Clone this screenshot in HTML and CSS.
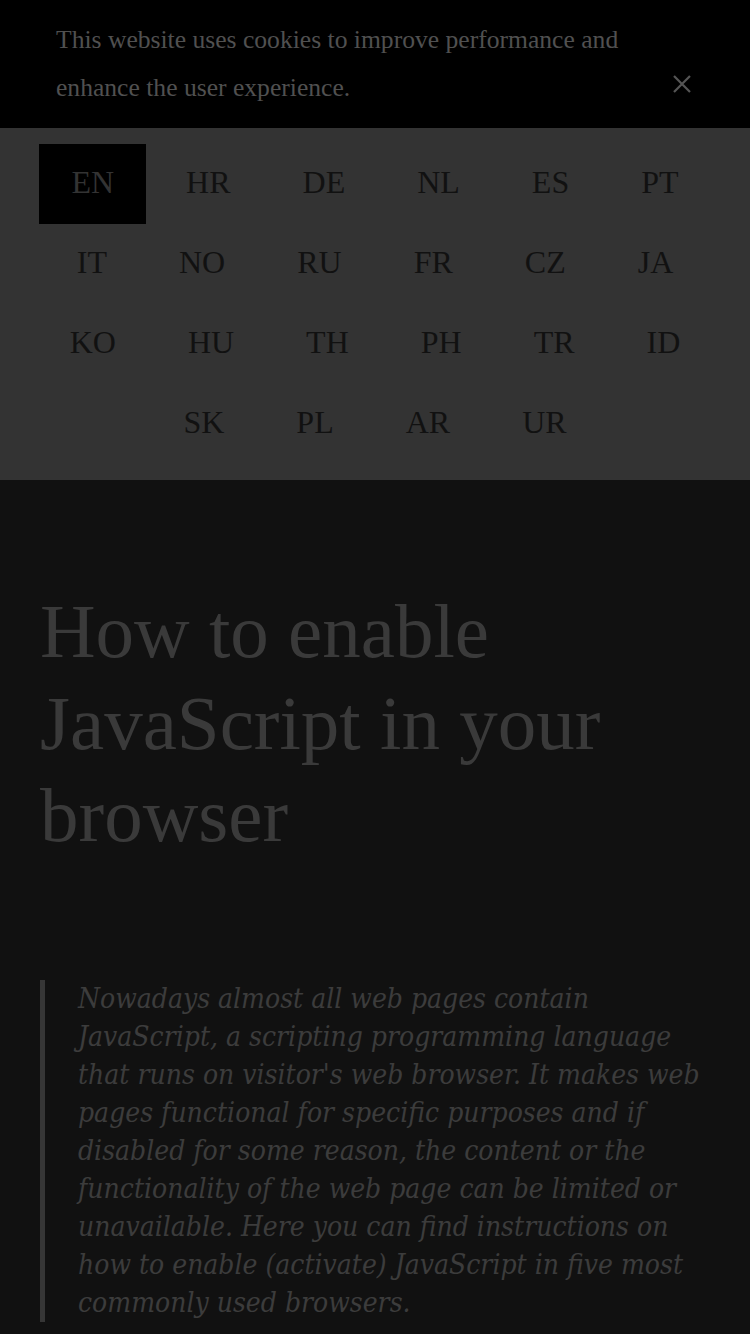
FILE: index.html
```html
<!DOCTYPE html>
<html lang="en">
<head>
<meta charset="utf-8">
<title>How to enable JavaScript in your browser</title>
<link rel="stylesheet" href="styles.css">
</head>
<body>
<div class="cookie">
  <p class="cookie-text">This website uses cookies to improve performance and enhance the user experience.</p>
  <button class="cookie-close" aria-label="Close">
    <svg width="18" height="18" viewBox="0 0 18 18"><path d="M1 1L17 17M17 1L1 17" stroke="currentColor" stroke-width="2.2" fill="none"/></svg>
  </button>
</div>
<nav class="langs">
  <a class="lang active">EN</a>
  <a class="lang">HR</a>
  <a class="lang">DE</a>
  <a class="lang">NL</a>
  <a class="lang">ES</a>
  <a class="lang">PT</a>
  <a class="lang">IT</a>
  <a class="lang">NO</a>
  <a class="lang">RU</a>
  <a class="lang">FR</a>
  <a class="lang">CZ</a>
  <a class="lang">JA</a>
  <a class="lang">KO</a>
  <a class="lang">HU</a>
  <a class="lang">TH</a>
  <a class="lang">PH</a>
  <a class="lang">TR</a>
  <a class="lang">ID</a>
  <a class="lang">SK</a>
  <a class="lang">PL</a>
  <a class="lang">AR</a>
  <a class="lang">UR</a>
</nav>
<main class="main">
  <h1 class="title">How to enable JavaScript in your browser</h1>
  <blockquote class="intro">Nowadays almost all web pages contain JavaScript, a scripting programming language that runs on visitor's web browser. It makes web pages functional for specific purposes and if disabled for some reason, the content or the functionality of the web page can be limited or unavailable. Here you can find instructions on how to enable (activate) JavaScript in five most commonly used browsers.</blockquote>
</main>
</body>
</html>
```
FILE: styles.css
```css
html, body {
  margin: 0;
  padding: 0;
  background: #111111;
}
body {
  font-family: "Liberation Serif", "Times New Roman", serif;
  width: 750px;
  overflow: hidden;
}
.cookie {
  background: #000000;
  height: 128px;
  box-sizing: border-box;
  padding: 16px 0 16px 56px;
  display: flex;
  align-items: center;
}
.cookie-text {
  margin: 0;
  width: 590px;
  font-size: 25.6px;
  line-height: 48px;
  color: #505050;
}
.cookie-close {
  margin-left: auto;
  margin-right: 59px;
  margin-top: 40px;
  background: none;
  border: 0;
  padding: 0;
  color: #555555;
  width: 18px;
  height: 18px;
  display: flex;
}
.langs {
  background: #333333;
  padding: 16px 36px;
  display: flex;
  flex-wrap: wrap;
  justify-content: center;
  column-gap: 8px;
}
.lang {
  display: block;
  height: 80px;
  box-sizing: border-box;
  line-height: 76px;
  padding: 0 32px 4px;
  font-size: 32px;
  color: #111111;
}
.lang.active {
  background: #000000;
  color: #333333;
}
.main {
  padding: 105px 40px 0;
}
.title {
  margin: 0;
  font-weight: normal;
  font-size: 77px;
  line-height: 92px;
  color: #3a3a3a;
}
.intro {
  margin: 119px 0 0;
  border-left: 5px solid #363636;
  padding-left: 33px;
  font-family: "DejaVu Serif Condensed", "DejaVu Serif", serif;
  font-style: italic;
  font-size: 28px;
  line-height: 38px;
  color: #3c3c3c;
}
```
